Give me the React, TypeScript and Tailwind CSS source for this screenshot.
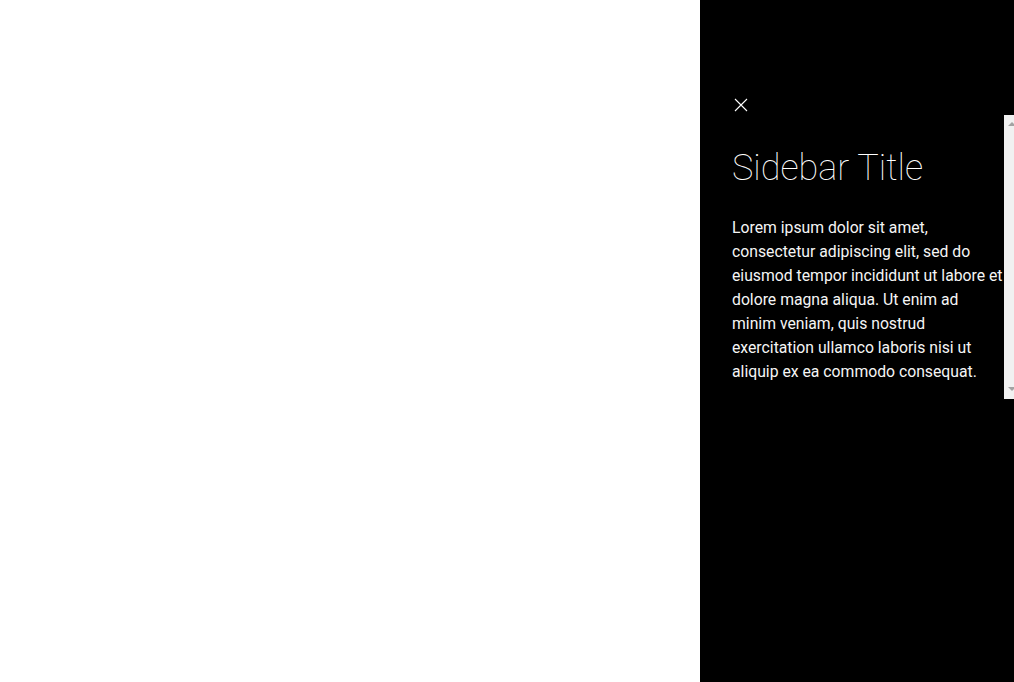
import React from "react";

export default function App() {
  return (
    <div className="flex h-[682px] w-[1014px] overflow-hidden bg-white" style={{ fontFamily: "Roboto, 'Liberation Sans', sans-serif" }}>
      <div className="w-[700px] flex-none bg-white" />
      <aside className="flex h-full w-[320px] flex-none flex-col bg-black text-white">
        <div className="flex h-[115px] flex-none items-start pl-[34px] pt-[98px]">
          <svg width="14" height="14" viewBox="0 0 14 14" className="block">
            <path d="M1 1 L13 13 M13 1 L1 13" stroke="#ffffff" strokeWidth="1.1" fill="none" />
          </svg>
        </div>
        <div className="flex h-[284px] w-[319px] flex-none">
          <div className="w-[304px] flex-none overflow-hidden pl-[32px] pt-[32px]">
            <h2 className="text-[36px] font-thin leading-[43px] text-white">Sidebar Title</h2>
            <p className="mt-[26px] text-[15.75px] leading-[24px] text-[#f5f5f5]">
              Lorem ipsum dolor sit amet, consectetur adipiscing elit, sed do eiusmod tempor incididunt ut labore et dolore magna aliqua. Ut enim ad minim veniam, quis nostrud exercitation ullamco laboris nisi ut aliquip ex ea commodo consequat.
            </p>
          </div>
          <div className="flex w-[15px] flex-none flex-col items-center justify-between bg-[#f1f1f1] pb-[8px] pt-[7px]">
            <svg width="8" height="4" viewBox="0 0 8 4" className="block">
              <path d="M0 4 L4 0 L8 4 Z" fill="#a3a3a3" />
            </svg>
            <svg width="8" height="4" viewBox="0 0 8 4" className="block">
              <path d="M0 0 L8 0 L4 4 Z" fill="#a3a3a3" />
            </svg>
          </div>
        </div>
      </aside>
    </div>
  );
}
